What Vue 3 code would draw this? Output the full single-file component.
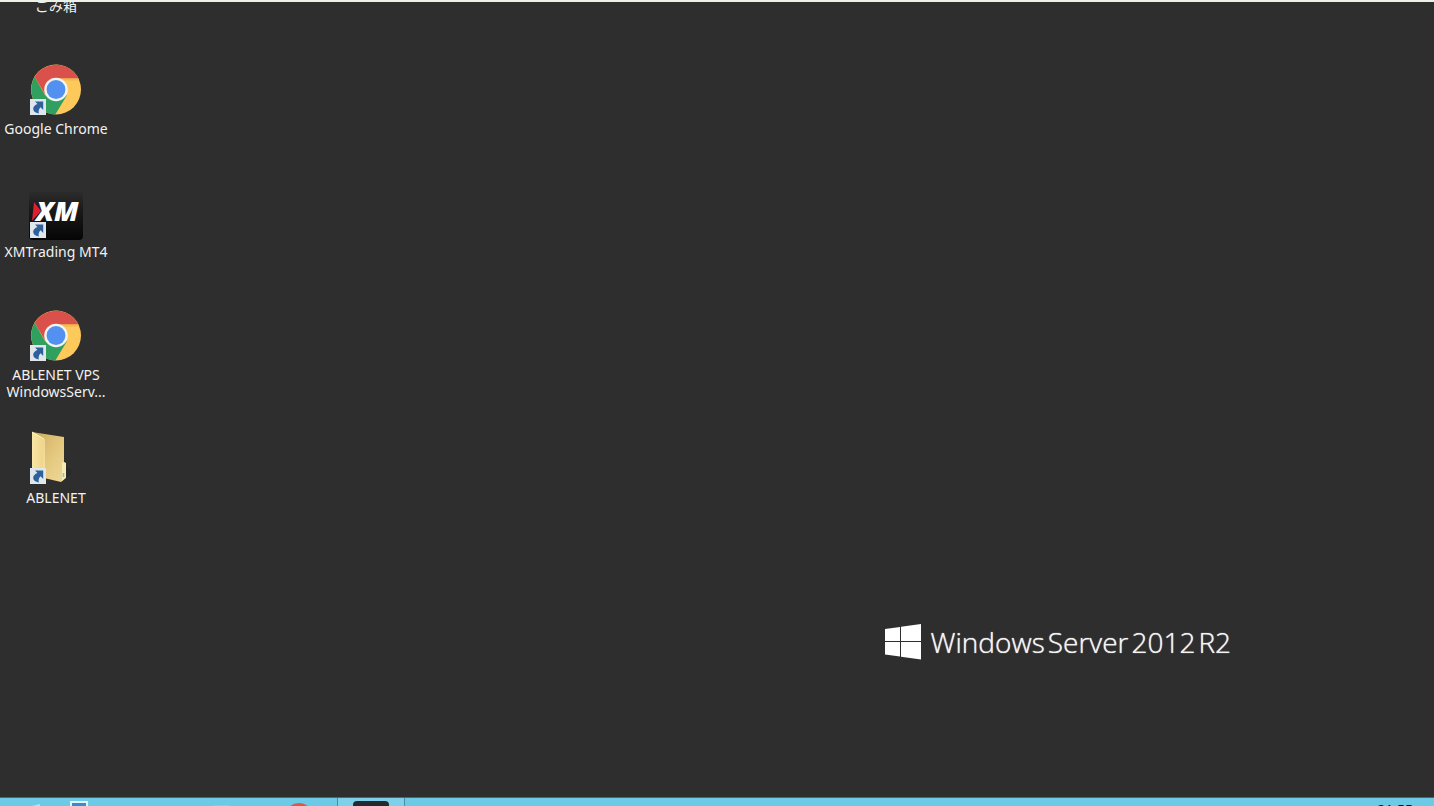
<script setup>
const shortcuts = [
  { id: 'bin', lines: ['ごみ箱'] },
  { id: 'chrome', icon: 'chrome', lines: ['Google Chrome'] },
  { id: 'xm', icon: 'xm', lines: ['XMTrading MT4'] },
  { id: 'vps', icon: 'chrome', lines: ['ABLENET VPS', 'WindowsServ...'] },
  { id: 'folder', icon: 'folder', lines: ['ABLENET'] },
]
</script>

<template>
  <div class="screen">
    <main class="desktop">
      <nav class="shortcuts">
        <button v-for="s in shortcuts" :key="s.id" type="button" class="shortcut">
          <svg v-if="s.icon" class="shortcut-icon" viewBox="0 0 56 56" aria-hidden="true">
            <g v-if="s.icon === 'chrome'">
              <circle cx="28" cy="27.5" r="25" fill="#fdc95a"/>
              <path d="M28 27.5L17.2 33.5 6.7 14.8A25 25 0 0 0 27.3 52.5L38.8 33.5Z" fill="#30a060"/>
              <path d="M28 16.5H50.5A25 25 0 0 0 6.7 14.8L17.4 33Z" fill="#d9514a"/>
              <path d="M34 16.5H50.5L51 18.5 36 18.5Z" fill="#efb755"/>
              <circle cx="28" cy="27.5" r="11.8" fill="#f3f3f0"/>
              <circle cx="28" cy="27.5" r="9.4" fill="#5291ef"/>
            </g>
            <g v-else-if="s.icon === 'xm'">
              <defs>
                <linearGradient id="xm-bg" x1="0" y1="0" x2="0" y2="1">
                  <stop offset="0" stop-color="#2b2b2b"/>
                  <stop offset=".35" stop-color="#1b1b1b"/>
                  <stop offset="1" stop-color="#050505"/>
                </linearGradient>
              </defs>
              <rect x="1" y="7" width="54" height="48" rx="4" fill="url(#xm-bg)"/>
              <path d="M6 17L13 26 4 36Z" fill="#e01f2d"/>
              <text x="8" y="36" class="xm-text">XM</text>
            </g>
            <g v-else>
              <defs>
                <linearGradient id="folder-front" x1="0" y1="0" x2="1" y2="0">
                  <stop offset="0" stop-color="#f9e7a6"/>
                  <stop offset="1" stop-color="#f0d58a"/>
                </linearGradient>
                <linearGradient id="folder-back" x1="0" y1="0" x2="1" y2="1">
                  <stop offset="0" stop-color="#c9ab5c"/>
                  <stop offset=".5" stop-color="#e3c67c"/>
                  <stop offset="1" stop-color="#efda9a"/>
                </linearGradient>
              </defs>
              <path d="M37 36Q46 38 42 44L36 50Z" fill="#292929"/>
              <path d="M4 1L36 6V31L38 32V47L33 51 16 47Z" fill="url(#folder-back)"/>
              <path d="M4 1L15 7V43L4 45Z" fill="url(#folder-front)"/>
              <path d="M4 1L16 8V39" fill="none" stroke="#fff4c4" stroke-width="1"/>
              <path d="M34 31L38 32V46L34 50Z" fill="#f8eab7"/>
              <path d="M35.5 42V46" stroke="#84bde0" stroke-width="1.5"/>
            </g>
            <rect x="2" y="37" width="16" height="16" fill="#e0e7ec"/>
            <path d="M7 39.5H15.2V48L12.6 45.3Q10 47.5 10.8 51.5 5 50.5 5.2 46.5 5.5 43.5 9.5 42Z" fill="#2d609c"/>
          </svg>
          <span class="shortcut-label">
            <span v-for="line in s.lines" :key="line" class="shortcut-line">{{ line }}</span>
          </span>
        </button>
      </nav>
      <div class="brand">
        <svg class="brand-logo" viewBox="0 0 36 36" aria-hidden="true">
          <path d="M0 5L15 3V17H0ZM16 2.8L36 0V17H16ZM0 18H15V32.5L0 30.5ZM16 18H36V35.5L16 32.7Z" fill="#fff"/>
        </svg>
        <div class="brand-name">
          <span>Windows</span>
          <span>Server</span>
          <span>2012</span>
          <span>R2</span>
        </div>
      </div>
    </main>
    <footer class="taskbar">
      <button type="button" class="task task-start" aria-label="Start">
        <svg viewBox="0 0 32 32" aria-hidden="true"><path d="M3 7L14 6V16H3ZM16 6L24 4V16H16ZM3 18H14V27L3 25ZM16 18H24V29L16 27Z" fill="#b5e3f0"/></svg>
      </button>
      <button type="button" class="task" aria-label="Server Manager">
        <svg viewBox="0 0 32 32" aria-hidden="true"><path d="M8 2H24V26H8Z" fill="#368bd2" stroke="#e4f3fa" stroke-width="2"/></svg>
      </button>
      <button type="button" class="task" aria-label="PowerShell">
        <svg viewBox="0 0 32 32" aria-hidden="true"><path d="M3 9H29V27H3Z" fill="#24548c"/></svg>
      </button>
      <button type="button" class="task" aria-label="Explorer">
        <svg viewBox="0 0 32 32" aria-hidden="true"><path d="M5 5H20V8H29V28H2V8H5Z" fill="#d9b784"/></svg>
      </button>
      <button type="button" class="task" aria-label="Google Chrome">
        <svg viewBox="0 0 32 32" aria-hidden="true"><circle cx="17" cy="17.5" r="14.5" fill="#d9574b"/></svg>
      </button>
      <button type="button" class="task task-active" aria-label="XMTrading MT4">
        <svg viewBox="0 0 36 32" aria-hidden="true"><rect y="1" width="36" height="31" rx="4" fill="#252a2e"/></svg>
      </button>
      <time class="clock">21:55</time>
    </footer>
  </div>
</template>

<style>
body{background:#2e2e2e;overflow:hidden}
</style>

<style scoped>
.screen{display:flex;flex-direction:column;height:100vh;overflow:hidden;box-sizing:border-box;border-top:2px solid #edf0e6;background:#2e2e2e}
.desktop{flex:1;min-height:0;display:flex;justify-content:space-between;overflow:hidden}
.shortcuts{display:flex;flex-direction:column;gap:31px;margin-top:-5px}
.shortcut{display:flex;flex-direction:column;align-items:center;gap:2px;width:112px;padding:0;border:0;background:none;color:#f2f2f2;font:14px/17px 'Noto Sans','Noto Sans CJK JP',sans-serif;cursor:pointer}
.shortcut-icon{display:block;width:56px;height:56px}
.shortcut-label{height:34px}
.shortcut-line{display:block;white-space:nowrap}
.xm-text{font:italic 800 27px 'Open Sans',sans-serif;fill:#fff}
.brand{display:flex;align-items:center;gap:10px;align-self:flex-end;margin:0 203px 138px 0}
.brand-logo{width:36px;height:36px}
.brand-name{display:flex;gap:3px;font:300 28px/34px 'Open Sans',sans-serif;color:#f4f4f4;text-shadow:0 0 1px #f4f4f4;white-space:nowrap}
.taskbar{flex:none;display:flex;gap:5px;height:40px;margin-bottom:-32px;background:#6ccae6;box-shadow:0 -1px #55626a}
.task{display:flex;justify-content:center;width:68px;height:40px;padding:2px 0 0;border:0;background:none}
.task svg{flex:none;height:32px}
.task-start{justify-content:flex-end;width:40px}
.task-start svg{margin-right:-8px}
.task-active{border:solid #4a8da5;border-width:0 1px;background:#7fd1e9}
.clock{margin-left:auto;padding:3px 21px 0 0;font:14px/18px 'Noto Sans',sans-serif;color:#111}
</style>
